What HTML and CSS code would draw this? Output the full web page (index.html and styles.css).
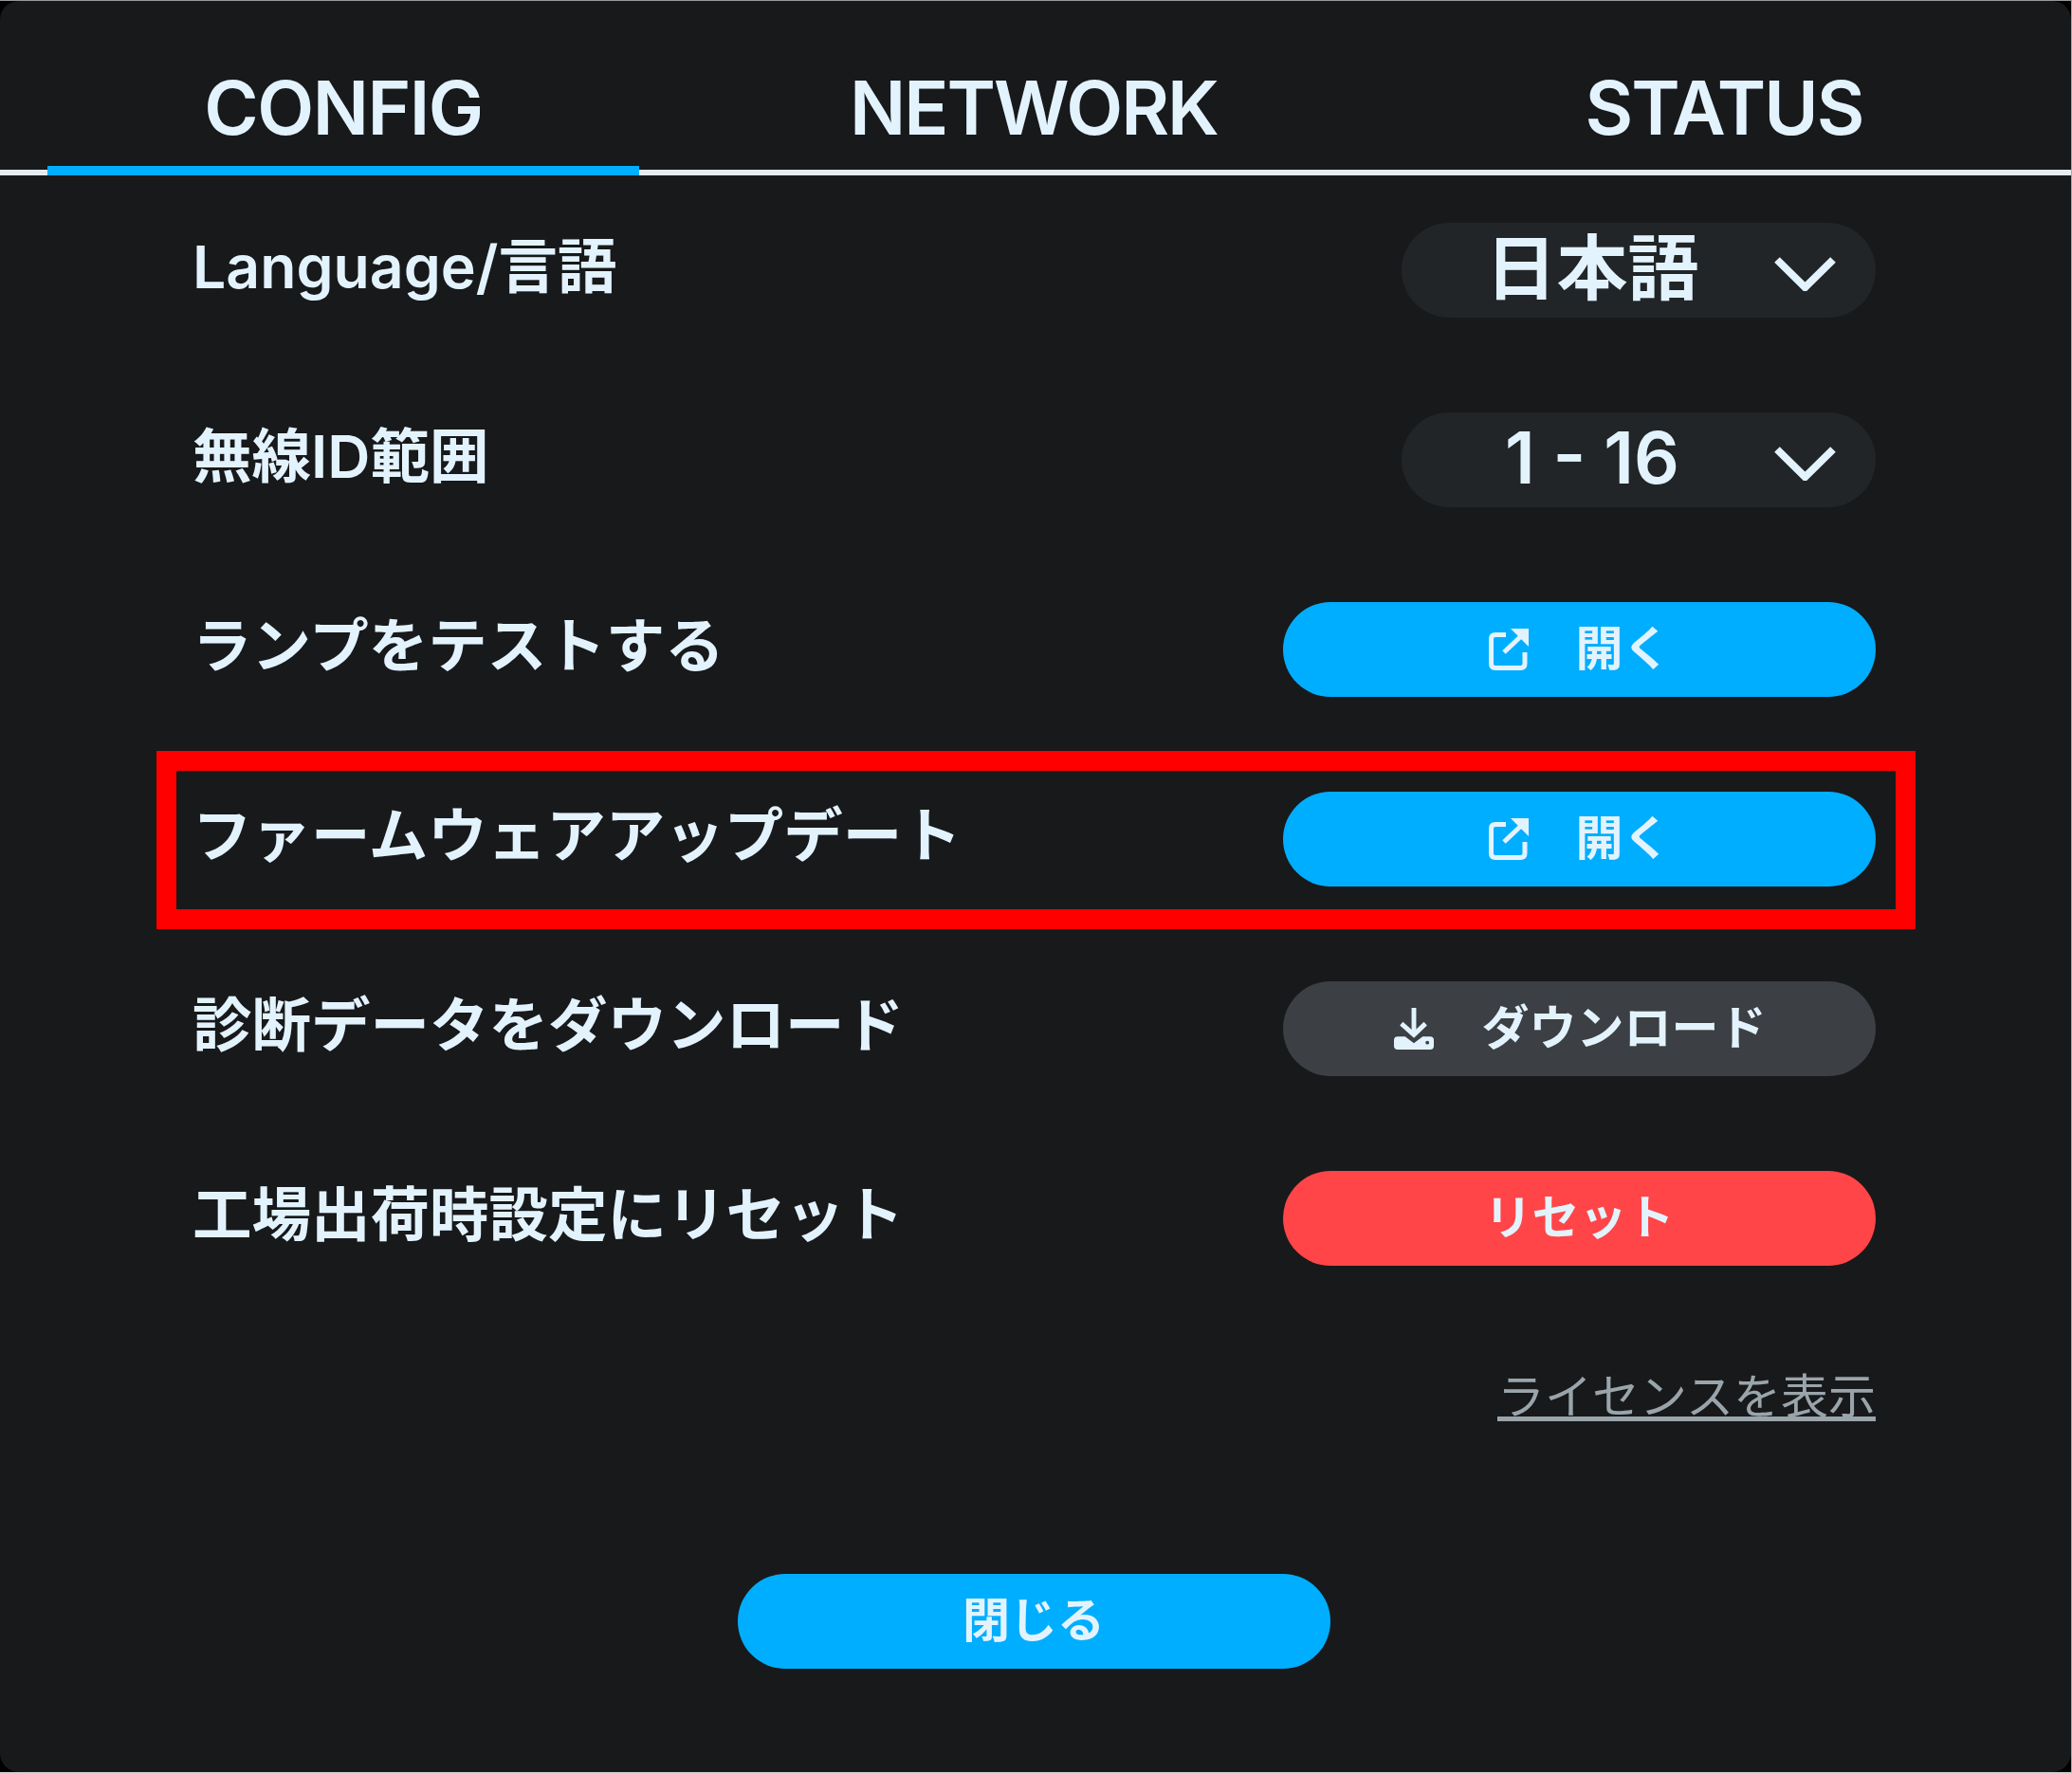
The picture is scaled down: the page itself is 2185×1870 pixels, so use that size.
FILE: index.html
```html
<!DOCTYPE html>
<html lang="ja">
<head>
<title>Config</title>
<link rel="stylesheet" href="styles.css">
</head>
<body>
<div class="frame">
<div class="panel">
  <div class="tabs">
    <div class="tab active">CONFIG</div>
    <div class="tab">NETWORK</div>
    <div class="tab">STATUS</div>
  </div>
  <div class="rows">
    <div class="row">
      <span class="label">Language/言語</span>
      <div class="select">
        <span class="value ja">日本語</span>
        <svg class="chevron" viewBox="0 0 67 37"><path d="M4 4 L33.5 33 L63 4"/></svg>
      </div>
    </div>
    <div class="row">
      <span class="label">無線ID範囲</span>
      <div class="select">
        <span class="value">1 - 16</span>
        <svg class="chevron" viewBox="0 0 67 37"><path d="M4 4 L33.5 33 L63 4"/></svg>
      </div>
    </div>
    <div class="row">
      <span class="label">ランプをテストする</span>
      <button class="button blue">
        <svg class="icon" viewBox="0 0 44 44"><path class="line" d="M18 6.5 H7 Q2.5 6.5 2.5 11 V37 Q2.5 41.5 7 41.5 H33.5 Q38 41.5 38 37 V25"/><path class="line" d="M16 25 L34 8"/><path class="solid" d="M23 0 H42 V19 Z"/></svg>
        <span>開く</span>
      </button>
    </div>
    <div class="row">
      <span class="label">ファームウェアアップデート</span>
      <button class="button blue">
        <svg class="icon" viewBox="0 0 44 44"><path class="line" d="M18 6.5 H7 Q2.5 6.5 2.5 11 V37 Q2.5 41.5 7 41.5 H33.5 Q38 41.5 38 37 V25"/><path class="line" d="M16 25 L34 8"/><path class="solid" d="M23 0 H42 V19 Z"/></svg>
        <span>開く</span>
      </button>
    </div>
    <div class="row">
      <span class="label">診断データをダウンロード</span>
      <button class="button gray">
        <svg class="icon" viewBox="0 0 45 45"><path class="line" d="M22.5 0 V28"/><path class="line" d="M9 17 L22.5 29 L35 17"/><path class="solid" d="M1 35 Q1 31 5 31 H13 L22.5 38 L32 31 H40 Q44 31 44 35 V41 Q44 45 40 45 H5 Q1 45 1 41 Z"/><circle class="dot" cx="37" cy="37.5" r="2"/></svg>
        <span>ダウンロード</span>
      </button>
    </div>
    <div class="row">
      <span class="label">工場出荷時設定にリセット</span>
      <button class="button red"><span>リセット</span></button>
    </div>
  </div>
  <div class="license"><a href="#">ライセンスを表示</a></div>
  <div class="footer"><button class="button blue"><span>閉じる</span></button></div>
  <div class="highlight"></div>
</div>
</div>
</body>
</html>
```
FILE: styles.css
```css
* {
  box-sizing: border-box;
}
html, body {
  margin: 0;
  background: #000;
}
.frame {
  width: 2185px;
  height: 1870px;
  background: #000;
  border-top: 1px solid #999;
  border-right: 1px solid #aaa;
  border-bottom: 1px solid #ccc;
}
.panel {
  position: relative;
  height: 100%;
  background-color: #18191b;
  color: #e3f3fe;
  border-radius: 20px;
  font-family: Inter, "Noto Sans CJK JP", sans-serif;
  overflow: hidden;
}
.tabs {
  display: flex;
  height: 184px;
  border-bottom: 6px solid #e6ebf0;
}
.tab {
  flex: 1;
  position: relative;
  text-align: center;
  font-size: 78px;
  font-weight: 600;
  letter-spacing: -2px;
  line-height: 94px;
  padding: 66px 4px 0 0;
}
.tab.active {
  letter-spacing: -1.5px;
}
.tab.active::after {
  content: "";
  position: absolute;
  left: 50px;
  right: 54px;
  bottom: -6px;
  height: 10px;
  background-color: #00aeff;
}
.rows {
  padding: 50px 206px 0 203px;
  display: flex;
  flex-direction: column;
  gap: 100px;
}
.row {
  display: flex;
  align-items: center;
  justify-content: space-between;
  height: 100px;
}
.label {
  font-size: 62.5px;
  font-weight: 600;
  line-height: 78px;
  margin-top: -8px;
}
.select {
  display: flex;
  align-items: center;
  width: 500px;
  height: 100px;
  border-radius: 50px;
  background-color: #212527;
  padding: 0 41px 0 10px;
}
.value {
  flex: 1;
  text-align: center;
  font-size: 75px;
  font-weight: 600;
  margin-top: -5px;
}
.value.ja {
  margin-top: -15px;
}
.chevron {
  width: 67px;
  height: 37px;
  margin-top: 6px;
}
.chevron path {
  fill: none;
  stroke: #e3f3fe;
  stroke-width: 8;
}
.button {
  display: flex;
  align-items: center;
  justify-content: center;
  gap: 48px;
  width: 625px;
  height: 100px;
  border: 0;
  border-radius: 50px;
  color: #e3f3fe;
  font-family: inherit;
  font-size: 50px;
  font-weight: 600;
}
.button span {
  margin-top: -10px;
}
.blue {
  background-color: #00aeff;
}
.gray {
  background-color: #3c3f43;
  gap: 50px;
}
.red {
  background-color: #ff4547;
}
.icon {
  width: 44px;
  height: 44px;
}
.line {
  fill: none;
  stroke: #e3f3fe;
  stroke-width: 5;
}
.solid {
  fill: #e3f3fe;
}
.dot {
  fill: #3c3f43;
}
.license {
  text-align: right;
  padding: 108px 206px 0 0;
  font-size: 50px;
  line-height: 60px;
}
.license a {
  color: #9aa5ab;
}
.footer {
  display: flex;
  justify-content: center;
  padding-right: 4px;
  margin-top: 157px;
}
.highlight {
  position: absolute;
  left: 165px;
  top: 791px;
  width: 1855px;
  height: 188px;
  border: 21px solid #ff0000;
}
```
